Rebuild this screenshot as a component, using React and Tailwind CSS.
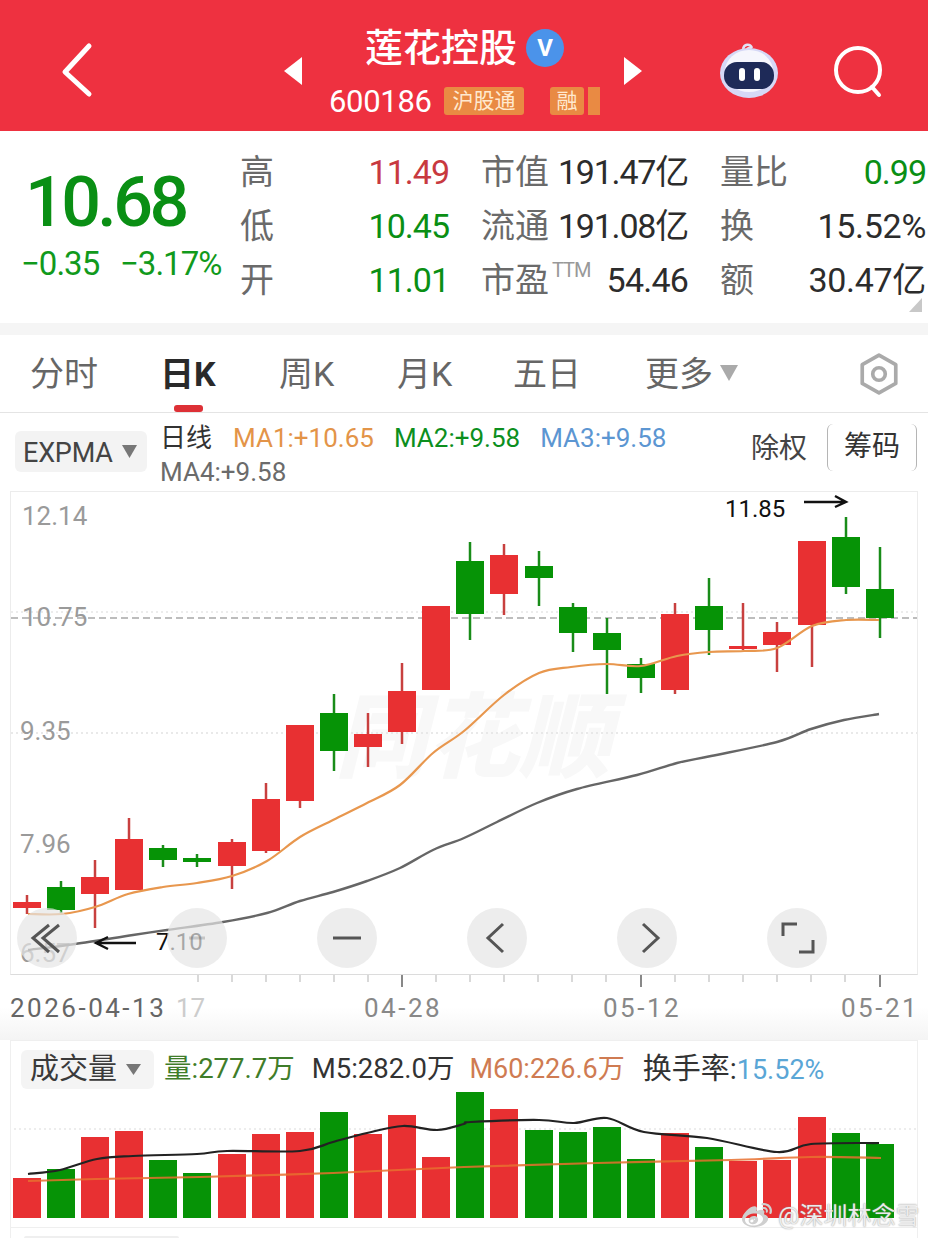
import React from "react";
import { FaWeibo } from "react-icons/fa";

const XS = [27,61,95,129,163,197,232,266,300,334,368,402,436,470,504,539,573,607,641,675,709,743,777,812,846,880];
// [wickTop, wickBottom, bodyTop, bodyBottom, red?, volumeTop]
const C = [
  [895,914,902,908,1,1178],[881,913,887,910,0,1169],[860,928,877,894,1,1137],[818,890,839,890,1,1131],
  [845,867,848,860,0,1160],[854,867,858,862,0,1173],[839,889,842,866,1,1154],[783,853,799,851,1,1134],
  [725,808,725,801,1,1132],[694,771,713,751,0,1112],[713,767,734,747,1,1134],[663,744,691,732,1,1115],
  [606,690,606,690,1,1157],[542,640,561,614,0,1092],[544,615,555,594,1,1109],[551,606,566,578,0,1130],
  [603,652,607,633,0,1132],[618,694,633,650,0,1127],[658,693,664,678,0,1159],[603,694,614,690,1,1133],
  [578,655,606,630,0,1147],[603,650,646,649,1,1161],[622,672,632,645,1,1160],[541,667,541,625,1,1117],
  [517,594,537,587,0,1133],[547,638,589,618,0,1144],
];
const ORANGE = [[28,914],[62,914],[95,907],[128,894],[163,887],[197,883],[232,876],[267,861],[300,837],[333,820],[367,803],[400,785],[433,753],[464,731],[504,695],[539,673],[571,667],[607,664],[641,666],[677,656],[709,652],[744,651],[777,648],[812,626],[846,620],[879,620]];
const GRAY = [[28,950],[75,944],[133,935],[167,930],[223,922],[267,913],[300,901],[333,892],[367,881],[400,868],[433,850],[464,838],[497,822],[537,803],[577,789],[637,775],[677,763],[711,756],[777,742],[811,729],[844,720],[879,714]];
const VBLACK = [[28,1174],[60,1170],[97,1159],[133,1156],[197,1154],[227,1151],[300,1151],[333,1142],[367,1133],[403,1126],[437,1130],[464,1124],[471,1122],[539,1120],[574,1123],[607,1118],[644,1132],[707,1138],[777,1152],[811,1144],[879,1143]];
const VORANGE = [[28,1181],[97,1179],[200,1177],[333,1173],[464,1167],[597,1163],[731,1160],[811,1157],[881,1158]];
const RED = "#e83032", GREEN = "#069306";
const TICKS = [198,232,266,300,334,368,402,436,470,504,538,572,606,641,675,709,743,777,811,845,880];
const MAJOR = [402,641,880];

function smooth(p) {
  let d = `M${p[0][0]} ${p[0][1]}`;
  for (let i = 0; i < p.length - 1; i++) {
    const a = p[i - 1] || p[i], b = p[i], c = p[i + 1], e = p[i + 2] || c;
    const c1x = b[0] + (c[0] - a[0]) / 6, c1y = b[1] + (c[1] - a[1]) / 6;
    const c2x = c[0] - (e[0] - b[0]) / 6, c2y = c[1] - (e[1] - b[1]) / 6;
    d += `C${c1x} ${c1y} ${c2x} ${c2y} ${c[0]} ${c[1]}`;
  }
  return d;
}

function Row({ label, value, color = "text-[#2c2c2c]", track = "tracking-[-1px]" }) {
  return (
    <div className="flex items-center justify-between h-[54px]">
      <span className="text-[34px] text-[#6a6a6a] whitespace-nowrap flex items-start">{label}</span>
      <span className={`text-[34px] whitespace-nowrap ${track} ${color}`}>{value}</span>
    </div>
  );
}

function Btn({ children }) {
  return (
    <div className="w-[60px] h-[60px] rounded-full bg-[#e6e6e6]/70 flex items-center justify-center">
      <svg width="60" height="60" viewBox="0 0 60 60" fill="none" stroke="#555" strokeWidth="3">{children}</svg>
    </div>
  );
}

function Tri({ w = 16, h = 14, color = "#777" }) {
  return <svg width={w} height={h} viewBox="0 0 16 14" preserveAspectRatio="none"><path d="M0 0H16L8 14Z" fill={color} /></svg>;
}

export default function App() {
  return (
    <div className="w-[928px] h-[1238px] overflow-hidden relative bg-white font-[Roboto,'Noto_Sans_CJK_SC',sans-serif]">
      {/* Header */}
      <header className="relative h-[131px] bg-[#ee3140] flex items-start text-white">
        <svg className="ml-[60px] mt-[42px]" width="36" height="56" viewBox="0 0 36 56" fill="none" stroke="#fff" strokeWidth="5" strokeLinecap="round" strokeLinejoin="round">
          <path d="M29 4L5 30L29 52" />
        </svg>
        <svg className="ml-[187px] mt-[56px]" width="20" height="30" viewBox="0 0 20 30"><path d="M19 1V29L1 15Z" fill="#fff" /></svg>
        <div className="ml-[29px] w-[294px] flex flex-col shrink-0">
          <div className="flex items-center h-[50px] mt-[23px] ml-[33px]">
            <span className="text-[38px] leading-none font-medium whitespace-nowrap">莲花控股</span>
            <span className="ml-[9px] w-[38px] h-[38px] rounded-full bg-[#4b93ea] flex items-center justify-center text-[24px] font-bold leading-none">V</span>
          </div>
          <div className="flex items-center h-[30px] mt-[13px] -ml-[3px]">
            <span className="text-[31px] tracking-[-0.3px] leading-none w-[115px] shrink-0">600186</span>
            <span className="w-[80px] h-[28px] rounded-[3px] bg-[#e98a43] text-[#ffe9cf] text-[21px] leading-[28px] text-center whitespace-nowrap">沪股通</span>
            <span className="ml-[26px] w-[34px] h-[28px] rounded-[3px] bg-[#e98a43] text-[#ffe9cf] text-[21px] leading-[28px] text-center">融</span>
            <span className="ml-[4px] w-[12px] h-[28px] bg-[#e98a43]"></span>
          </div>
        </div>
        <svg className="ml-[-3px] mt-[56px]" width="20" height="30" viewBox="0 0 20 30"><path d="M1 1V29L19 15Z" fill="#fff" /></svg>
        <svg className="ml-[76px] mt-[41px]" width="60" height="58" viewBox="0 0 60 58">
          <path d="M24 8C25 3 31 2 33 7" fill="none" stroke="#e2e3f6" strokeWidth="2.5" />
          <circle cx="30" cy="9" r="3" fill="#eeeefb" />
          <ellipse cx="30" cy="32" rx="29" ry="25" fill="#d6d8f6" />
          <ellipse cx="30" cy="30" rx="24" ry="21" fill="#f6f6fd" />
          <rect x="5" y="21" width="50" height="27" rx="13" fill="#1e2a58" />
          <rect x="20" y="27" width="6" height="13" rx="3" fill="#fff" />
          <rect x="35" y="27" width="6" height="13" rx="3" fill="#fff" />
        </svg>
        <svg className="ml-[55px] mt-[45px]" width="54" height="54" viewBox="0 0 54 54" fill="none" stroke="#fff" strokeWidth="4" strokeLinecap="round">
          <circle cx="24" cy="25" r="22" />
          <path d="M38 42L45 50" />
        </svg>
      </header>

      {/* Stats */}
      <section className="relative h-[192px] flex">
        <div className="w-[240px] shrink-0 pl-[21px]">
          <div className="mt-[29px] ml-[4px] text-[#0a8f14] text-[70px] leading-[84px] font-medium tracking-[-3.6px] whitespace-nowrap">10.68</div>
          <div className="flex text-[#119a1c] text-[33px] leading-[40px] tracking-[-1px] whitespace-nowrap">
            <span className="w-[99px]">−0.35</span>
            <span>−3.17%</span>
          </div>
        </div>
        <div className="mt-[14px] grid grid-cols-[209px_207px_208px] gap-x-[32px] h-fit">
          <div>
            <Row label="高" value="11.49" color="text-[#c8393f]" />
            <Row label="低" value="10.45" color="text-[#0a8f14]" />
            <Row label="开" value="11.01" color="text-[#0a8f14]" />
          </div>
          <div>
            <Row label="市值" value="191.47亿" track="tracking-[-1.2px]" />
            <Row label="流通" value="191.08亿" track="tracking-[-1.2px]" />
            <Row label={<>市盈<span className="ml-[3px] text-[20px] leading-[30px] text-[#999] tracking-[-1px]">TTM</span></>} value="54.46" track="tracking-[-0.8px]" />
          </div>
          <div className="pr-[2px]">
            <Row label="量比" value="0.99" color="text-[#0a8f14]" />
            <Row label="换" value="15.52%" track="tracking-[-0.3px]" />
            <Row label="额" value="30.47亿" track="tracking-[-0.3px]" />
          </div>
        </div>
        <svg className="absolute right-[6px] bottom-[11px]" width="13" height="14" viewBox="0 0 13 14"><path d="M13 0V14H0Z" fill="#c8c8c8" /></svg>
      </section>
      <div className="h-[12px] bg-[#f5f5f5]"></div>

      {/* Tabs */}
      <nav className="relative h-[78px] border-b border-[#e4e4e4] flex items-start pt-[19px] pl-[30px] text-[34px] leading-[40px] text-[#666]">
        <span className="w-[130px] shrink-0">分时</span>
        <span className="w-[119px] shrink-0 font-bold text-[#2a2a2a]">日K</span>
        <span className="w-[118px] shrink-0">周K</span>
        <span className="w-[116px] shrink-0">月K</span>
        <span className="w-[132px] shrink-0">五日</span>
        <span className="shrink-0">更多</span>
        <span className="ml-[7px] mt-[11px]"><Tri w={18} h={16} color="#aaa" /></span>
        <svg className="ml-[119px] -mt-[2px]" width="44" height="44" viewBox="0 0 42 42" fill="none" stroke="#aaa" strokeWidth="3.5" strokeLinejoin="round">
          <path d="M21 3L37 12V30L21 39L5 30V12Z" />
          <circle cx="21" cy="21" r="6" />
        </svg>
        <span className="absolute left-[174px] bottom-0 w-[29px] h-[7px] rounded-[3px] bg-[#dd3036]"></span>
      </nav>

      {/* Indicator row */}
      <section className="relative h-[78px] flex items-start">
        <div className="ml-[15px] mt-[18px] w-[132px] h-[41px] rounded-[6px] bg-[#f3f3f3] flex items-center pl-[8px] pt-[4px] shrink-0">
          <span className="text-[27px] text-[#444] tracking-[-0.2px]">EXPMA</span>
          <span className="ml-[9px] -mt-[4px]"><Tri w={15} h={13} /></span>
        </div>
        <div className="ml-[13px] w-[560px] shrink-0 flex flex-wrap gap-x-[20px] text-[26px] leading-[34px] mt-[8px] whitespace-nowrap">
          <span className="text-[#333] mr-[1px]">日线</span>
          <span className="text-[#e39448]">MA1:+10.65</span>
          <span className="text-[#0c8f1e]">MA2:+9.58</span>
          <span className="text-[#5c96d2]">MA3:+9.58</span>
          <span className="text-[#6b6b6b] w-full">MA4:+9.58</span>
        </div>
        <span className="ml-[31px] mt-[16px] text-[28px] leading-[40px] text-[#444] whitespace-nowrap">除权</span>
        <span className="ml-[20px] mt-[11px] w-[90px] h-[47px] rounded-[6px] border-x border-[#b5b5b5] text-[28px] leading-[45px] text-center text-[#333] whitespace-nowrap">筹码</span>
      </section>

      {/* Chart */}
      <section className="relative ml-[10px] w-[908px] h-[484px] border border-[#ececec] border-b-[#dcdcdc]">
        <svg className="block absolute -left-px -top-px" width="908" height="484" viewBox="10 491 908 484">
          <text x="335" y="770" fontSize="92" fontWeight="900" fontStyle="italic" fill="#f8f8f8">同花顺</text>
          <line x1="11" x2="917" y1="612" y2="612" stroke="#e6e6e6" strokeWidth="1.5" strokeDasharray="2 3" />
          <line x1="11" x2="917" y1="618" y2="618" stroke="#a8a8a8" strokeWidth="1.5" strokeDasharray="7 4" />
          <line x1="11" x2="917" y1="733" y2="733" stroke="#e2e2e2" strokeWidth="1.5" strokeDasharray="2 3" />
          <g fontSize="26" fill="#9a9a9a">
            <text x="22" y="525">12.14</text>
            <text x="22" y="626">10.75</text>
            <text x="20" y="740">9.35</text>
            <text x="20" y="853">7.96</text>
            <text x="20" y="962">6.57</text>
          </g>
          {C.map((c, i) => {
            const col = c[4] ? RED : GREEN;
            const wick = c[4] ? "#c8403f" : "#198c19";
            return (
              <g key={i}>
                <line x1={XS[i]} x2={XS[i]} y1={c[0]} y2={c[1]} stroke={wick} strokeWidth="2.5" />
                <rect x={XS[i] - 14} y={c[2]} width="28" height={c[3] - c[2]} fill={col} />
              </g>
            );
          })}
          <path d={smooth(ORANGE)} fill="none" stroke="#e8974e" strokeWidth="2.2" strokeLinejoin="round" />
          <path d={smooth(GRAY)} fill="none" stroke="#666" strokeWidth="2.4" strokeLinejoin="round" />
          <g fontSize="24" fill="#111">
            <text x="725" y="517">11.85</text>
            <text x="156" y="950">7.10</text>
          </g>
          <g fill="none" stroke="#111" strokeWidth="2.4">
            <path d="M804 502H845M835 496L846 502L835 507" />
            <path d="M136 943H96M108 937L96 943L108 949" />
          </g>
        </svg>
        <div className="absolute left-[6px] top-[416px] flex gap-[90px]">
          <Btn><path d="M32 17L16 30L32 44M42 17L26 30L42 44" /></Btn>
          <Btn><path d="M22 30H38" strokeOpacity="0.25" /></Btn>
          <Btn><path d="M16 30H44" /></Btn>
          <Btn><path d="M36 16L21 30L36 44" /></Btn>
          <Btn><path d="M26 16L41 30L26 44" /></Btn>
          <Btn><path d="M16 28V16H30M46 32V44H32" /></Btn>
        </div>
      </section>

      {/* X axis */}
      <section className="h-[65px] bg-gradient-to-b from-white via-white to-[#f4f4f4] relative">
        <svg className="block" width="928" height="14" viewBox="0 975 928 14">
          {TICKS.map((x) => {
            const major = MAJOR.includes(x);
            return <line key={x} x1={x} x2={x} y1="975" y2={major ? 987 : 982} stroke={major ? "#888" : "#ccc"} strokeWidth={major ? 2 : 1.5} />;
          })}
        </svg>
        <div className="flex items-center pl-[10px] mt-[2px] text-[26px] leading-[34px] text-[#666] tracking-[2.5px] whitespace-nowrap">
          <span className="w-[166px] shrink-0">2026-04-13</span>
          <span className="w-[188px] shrink-0 text-[#ccc] tracking-[0px]">17</span>
          <span className="w-[239px] shrink-0 text-[#888]">04-28</span>
          <span className="w-[238px] shrink-0 text-[#888]">05-12</span>
          <span className="text-[#888]">05-21</span>
        </div>
      </section>

      {/* Volume */}
      <section className="relative ml-[10px] w-[908px] h-[188px] border border-[#efefef]">
        <div className="flex items-center h-[48px] pt-[8px] pl-[10px] text-[27.5px] leading-[40px] whitespace-nowrap">
          <div className="w-[133px] h-[39px] rounded-[6px] bg-[#f4f4f4] flex items-center pl-[9px] shrink-0 text-[29px] text-[#3a3a3a]">
            成交量
            <span className="ml-[9px]"><Tri w={15} h={11} /></span>
          </div>
          <span className="ml-[10px] text-[#3f7d2a]">量:277.7万</span>
          <span className="ml-[17px] text-[#333]">M5:282.0万</span>
          <span className="ml-[15px] text-[#cf7b52] text-[27px]">M60:226.6万</span>
          <span className="ml-[18px] text-[#333] text-[29px]">换手率:<span className="text-[#5aa6d6] text-[27px]">15.52%</span></span>
        </div>
        <svg className="block mt-[1px]" width="906" height="138" viewBox="11 1090 906 138">
          <line x1="14" x2="917" y1="1129" y2="1129" stroke="#e8e8e8" strokeWidth="1.5" strokeDasharray="2 3" />
          {C.map((c, i) => (
            <rect key={i} x={XS[i] - 14} y={c[5]} width="28" height={1218 - c[5]} fill={c[4] ? RED : GREEN} />
          ))}
          <path d={smooth(VBLACK)} fill="none" stroke="#222" strokeWidth="2.2" strokeLinejoin="round" />
          <path d={smooth(VORANGE)} fill="none" stroke="#e8702f" strokeWidth="2.2" strokeOpacity="0.85" strokeLinejoin="round" />
        </svg>
      </section>
      <div className="h-[10px] ml-[10px] w-[908px] border-x border-[#efefef] pt-[8px] pl-[13px]">
        <div className="w-[155px] h-[2px] rounded-t-[2px] bg-[#efefef]"></div>
      </div>

      {/* Watermark */}
      <div className="absolute left-[742px] top-[1201px] flex items-center gap-[6px] text-[24px] leading-[30px] text-[#ececec] [text-shadow:0_0_1.5px_#8f8f8f] whitespace-nowrap">
        <FaWeibo size={30} color="#cfcfcf" />
        <span>@深圳林念雪</span>
      </div>
    </div>
  );
}
